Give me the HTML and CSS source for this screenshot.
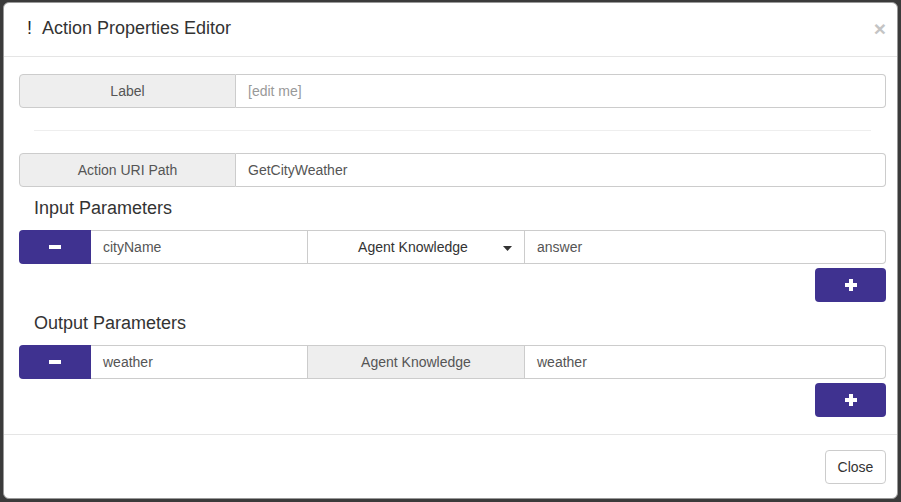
FILE: index.html
```html
<!DOCTYPE html>
<html>
<head>
<meta charset="utf-8">
<link rel="stylesheet" href="styles.css">
</head>
<body>
<div class="modal">
  <div class="modal-header">
    <span class="bang">!</span>
    <h3 class="title">Action Properties Editor</h3>
    <span class="close">&times;</span>
  </div>
  <div class="modal-body">
    <div class="group">
      <span class="addon">Label</span>
      <span class="input placeholder last">[edit me]</span>
    </div>
    <div class="hr"></div>
    <div class="group">
      <span class="addon">Action URI Path</span>
      <span class="input last">GetCityWeather</span>
    </div>
    <h4 class="section">Input Parameters</h4>
    <div class="group">
      <span class="btn-minus"><svg width="12" height="4" viewBox="0 0 12 4"><rect x="0" y="0" width="12" height="4" fill="#fff"/></svg></span>
      <span class="input name">cityName</span>
      <span class="select">Agent Knowledge<svg class="caret" width="9" height="5" viewBox="0 0 9 5"><path d="M0 0H9L4.5 5Z" fill="#333"/></svg></span>
      <span class="input last">answer</span>
    </div>
    <div class="add-row"><span class="btn-plus"><svg width="12" height="12" viewBox="0 0 12 12"><rect x="4" y="0" width="4" height="12" fill="#fff"/><rect x="0" y="4" width="12" height="4" fill="#fff"/></svg></span></div>
    <h4 class="section">Output Parameters</h4>
    <div class="group">
      <span class="btn-minus"><svg width="12" height="4" viewBox="0 0 12 4"><rect x="0" y="0" width="12" height="4" fill="#fff"/></svg></span>
      <span class="input name">weather</span>
      <span class="addon mid">Agent Knowledge</span>
      <span class="input last">weather</span>
    </div>
    <div class="add-row"><span class="btn-plus"><svg width="12" height="12" viewBox="0 0 12 12"><rect x="4" y="0" width="4" height="12" fill="#fff"/><rect x="0" y="4" width="12" height="4" fill="#fff"/></svg></span></div>
  </div>
  <div class="modal-footer">
    <span class="btn-close">Close</span>
  </div>
</div>
</body>
</html>
```
FILE: styles.css
```css
* { box-sizing: border-box; }
html, body { margin: 0; padding: 0; }
body {
  background: #3b3b3b;
  width: 901px;
  height: 502px;
  overflow: hidden;
  font-family: "Liberation Sans", Arial, sans-serif;
  font-size: 14px;
  color: #333;
  padding: 2px 0 0 3px;
}
.modal {
  width: 895px;
  height: 497px;
  background: #fff;
  border: 1px solid #999;
  border-radius: 6px;
  display: flex;
  flex-direction: column;
}
.modal-header {
  display: flex;
  align-items: center;
  height: 54px;
  padding: 0 15px 3px 15px;
  border-bottom: 1px solid #e5e5e5;
}
.bang {
  font-size: 18px;
  margin-left: 8px;
  width: 15px;
  color: #222;
}
.title {
  margin: 0;
  font-size: 18px;
  font-weight: normal;
  color: #333;
  line-height: 25px;
  flex: 1;
}
.close {
  font-size: 21px;
  font-weight: bold;
  color: #c4c4c4;
  line-height: 1;
  margin-right: -4px;
}
.modal-body {
  padding: 17px 11px 0 15px;
  flex: 1;
}
.group {
  display: flex;
  height: 34px;
}
.addon {
  width: 217px;
  flex: none;
  background: #eee;
  border: 1px solid #ccc;
  border-radius: 4px 0 0 4px;
  display: flex;
  align-items: center;
  justify-content: center;
  color: #555;
}
.addon.mid {
  border-radius: 0;
  border-left: none;
}
.input {
  flex: 1;
  border: 1px solid #ccc;
  border-left: none;
  display: flex;
  align-items: center;
  padding-left: 12px;
  color: #555;
}
.input.last { border-radius: 0 4px 4px 0; }
.input.name { flex: none; width: 217px; }
.placeholder { color: #999; }
.hr {
  height: 1px;
  background: #eee;
  margin: 22px 15px 22px 15px;
}
.section {
  margin: 11px 0 12px 15px;
  font-size: 18px;
  font-weight: normal;
  line-height: 20px;
  color: #333;
}
.btn-minus {
  width: 72px;
  flex: none;
  background: #3f3290;
  border-radius: 4px 0 0 4px;
  display: flex;
  align-items: center;
  justify-content: center;
}
.select {
  width: 217px;
  flex: none;
  border: 1px solid #ccc;
  border-left: none;
  display: flex;
  align-items: center;
  justify-content: center;
  color: #333;
  position: relative;
  padding-right: 6px;
}
.caret {
  position: absolute;
  right: 12px;
  top: 15px;
}
.add-row {
  display: flex;
  justify-content: flex-end;
  margin-top: 4px;
}
.btn-plus {
  width: 71px;
  height: 34px;
  background: #3f3290;
  border-radius: 4px;
  display: flex;
  align-items: center;
  justify-content: center;
}
.modal-footer {
  border-top: 1px solid #e5e5e5;
  padding: 15px 11px 14px 15px;
  display: flex;
  justify-content: flex-end;
}
.btn-close {
  height: 34px;
  width: 61px;
  border: 1px solid #ccc;
  border-radius: 4px;
  display: flex;
  align-items: center;
  justify-content: center;
  color: #333;
}
```
